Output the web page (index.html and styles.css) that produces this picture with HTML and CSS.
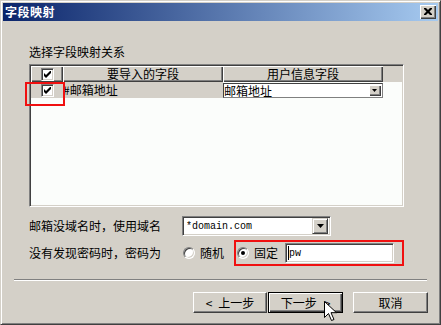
FILE: index.html
```html
<!DOCTYPE html>
<html>
<head>
  <title>字段映射</title>
  <link rel="stylesheet" href="styles.css">
</head>
<body>
  <div class="window">
    <div class="titlebar">
      <span class="title">字段映射</span>
      <span class="close">
        <svg width="8" height="7" viewBox="0 0 8 7"><path d="M0 0h2l2 2 2-2h2v1l-2.5 2.5 2.5 2.5v1h-2l-2-2-2 2h-2v-1l2.5-2.5-2.5-2.5z" fill="#000"/></svg>
      </span>
    </div>

    <div class="content">
      <div class="caption">选择字段映射关系</div>

      <div class="listview">
        <div class="lv-header">
          <div class="hd hd-check"><span class="chk"><svg width="7" height="7" viewBox="0 0 7 7"><path d="M0 2v3l2 2 5-5v-3l-5 5z" fill="#000"/></svg></span></div>
          <div class="hd hd-col">要导入的字段</div>
          <div class="hd hd-col">用户信息字段</div>
          <div class="hd-fill"></div>
        </div>
        <div class="lv-row">
          <div class="cell cell-check"><span class="chk"><svg width="7" height="7" viewBox="0 0 7 7"><path d="M0 2v3l2 2 5-5v-3l-5 5z" fill="#000"/></svg></span></div>
          <div class="cell cell-src">#邮箱地址</div>
          <div class="cell cell-dst">
            <div class="mini-combo">邮箱地址<span class="mini-drop"><svg width="5" height="3" viewBox="0 0 5 3"><path d="M0 0h5l-2.5 3z" fill="#000"/></svg></span></div>
          </div>
        </div>
      </div>

      <div class="form-row domain-row">
        <span class="label">邮箱没域名时，使用域名</span>
        <div class="combo">
          <span class="combo-text">*domain.com</span>
          <span class="drop"><svg width="7" height="4" viewBox="0 0 7 4"><path d="M0 0h7l-3.5 4z" fill="#000"/></svg></span>
        </div>
      </div>

      <div class="form-row pw-row">
        <span class="label">没有发现密码时，密码为</span>
        <label class="radio"><span class="radio-dot"></span>随机</label>
        <div class="marked">
          <label class="radio"><span class="radio-dot on"></span>固定</label>
          <div class="textbox"><span class="caret"></span>pw</div>
        </div>
      </div>

      <div class="divider"></div>

      <div class="buttons">
        <button class="btn btn-back"><span class="arr-l">&lt;</span>上一步</button>
        <button class="btn btn-default">下一步<span class="arr-r">&gt;</span></button>
        <button class="btn btn-cancel">取消</button>
      </div>
    </div>

    <div class="mark-row"></div>
    <svg class="cursor" width="13" height="21" viewBox="0 0 13 21"><path d="M0.5 0.5v16l4-4 3 7 2.5-1-3-6.8h5.5z" fill="#fff" stroke="#000"/></svg>
  </div>
</body>
</html>
```

FILE: styles.css
```css
body {
  margin: 0;
  font-family: "Noto Sans CJK SC", "Liberation Sans", sans-serif;
  font-size: 12px;
  color: #000;
}

.window {
  position: relative;
  width: 441px;
  height: 325px;
  box-sizing: border-box;
  background: #d4d0c8;
  border: 1px solid;
  border-color: #d4d0c8 #404040 #404040 #d4d0c8;
  box-shadow: inset 1px 1px #fff, inset -1px -1px #808080;
  padding: 2px;
  display: flex;
  flex-direction: column;
}

.titlebar {
  height: 18px;
  display: flex;
  align-items: center;
  justify-content: space-between;
  padding-left: 2px;
  background: linear-gradient(to right, #0a246a, #a6caf0);
}

.title {
  color: #fff;
  font-weight: bold;
  letter-spacing: 0.5px;
  line-height: 16px;
}

.close {
  width: 16px;
  height: 14px;
  margin-right: 2px;
  box-sizing: border-box;
  background: #d4d0c8;
  box-shadow: inset 1px 1px #fff, inset -1px -1px #404040, inset -2px -2px #808080;
  display: flex;
  align-items: center;
  justify-content: center;
  padding: 0 1px 1px 0;
}

.content {
  flex: 1;
  display: flex;
  flex-direction: column;
  padding-left: 26px;
}

.caption {
  margin-top: 23px;
  line-height: 16px;
  height: 16px;
}

.listview {
  margin-top: 4px;
  width: 375px;
  height: 143px;
  box-sizing: border-box;
  border: 1px solid;
  border-color: #808080 #fff #fff #808080;
  box-shadow: inset 1px 1px #404040, inset -1px -1px #d4d0c8;
  padding: 1px;
  background: #fbfdfb;
}

.lv-header {
  display: flex;
  height: 16px;
  background: #d4d0c8;
}

.hd {
  height: 16px;
  box-sizing: border-box;
  box-shadow: inset 1px 1px #fff, inset -1px -1px #404040, inset -2px -2px #808080;
  display: flex;
  align-items: center;
  justify-content: center;
  line-height: 16px;
}

.hd-check {
  width: 32px;
  padding-left: 1px;
}

.hd-col {
  width: 160px;
}

.hd-fill {
  flex: 1;
}

.lv-row {
  display: flex;
  height: 16px;
}

.cell {
  height: 16px;
  line-height: 16px;
  display: flex;
  align-items: center;
}

.cell-check {
  width: 32px;
  justify-content: center;
  background: #d4d0c8;
  padding-left: 1px;
  box-sizing: border-box;
}

.cell-src {
  width: 160px;
  background: #d4d0c8;
  white-space: nowrap;
}

.cell-dst {
  width: 160px;
  align-items: flex-start;
  padding-top: 1px;
  box-sizing: border-box;
}

.chk {
  width: 13px;
  height: 13px;
  box-sizing: border-box;
  background: #fff;
  border: 1px solid;
  border-color: #808080 #fff #fff #808080;
  box-shadow: inset 1px 1px #404040, inset -1px -1px #d4d0c8;
  display: flex;
  align-items: center;
  justify-content: center;
}

.mini-combo {
  width: 160px;
  height: 15px;
  box-sizing: border-box;
  border: 1px solid;
  border-color: #404040 #808080 #808080 #404040;
  background: #fff;
  display: flex;
  align-items: center;
  justify-content: space-between;
  line-height: 13px;
  padding-right: 1px;
}

.mini-drop {
  width: 12px;
  height: 11px;
  box-sizing: border-box;
  background: #d4d0c8;
  box-shadow: inset 1px 1px #fff, inset -1px -1px #404040, inset -2px -2px #808080;
  display: flex;
  align-items: center;
  justify-content: center;
  padding: 0 1px 1px 0;
}

.form-row {
  display: flex;
  align-items: center;
}

.form-row .label {
  width: 153px;
  line-height: 16px;
}

.domain-row {
  margin-top: 9px;
}

.combo {
  width: 149px;
  height: 20px;
  box-sizing: border-box;
  border: 1px solid;
  border-color: #808080 #fff #fff #808080;
  box-shadow: inset 1px 1px #404040, inset -1px -1px #d4d0c8;
  background: #fff;
  padding: 2px;
  display: flex;
  align-items: center;
  justify-content: space-between;
}

.combo-text,
.textbox {
  font-family: "Liberation Mono", "DejaVu Sans Mono", monospace;
  font-size: 10px;
  padding-left: 1px;
}

.drop {
  width: 16px;
  height: 16px;
  box-sizing: border-box;
  background: #d4d0c8;
  border: 1px solid;
  border-color: #d4d0c8 #404040 #404040 #d4d0c8;
  box-shadow: inset 1px 1px #fff, inset -1px -1px #808080;
  display: flex;
  align-items: center;
  justify-content: center;
}

.pw-row {
  margin-top: 4px;
  height: 26px;
}

.radio {
  display: flex;
  align-items: center;
  gap: 5px;
  line-height: 16px;
  margin-left: 1px;
}

.radio-dot {
  width: 12px;
  height: 12px;
  box-sizing: border-box;
  border-radius: 50%;
  background: #fff;
  border: 1px solid;
  border-color: #808080 #fff #fff #808080;
  box-shadow: inset 1px 1px #404040, inset -1px -1px #d4d0c8;
  display: flex;
  align-items: center;
  justify-content: center;
}

.radio-dot.on::after {
  content: "";
  width: 4px;
  height: 4px;
  border-radius: 50%;
  background: #000;
}

.marked {
  margin-left: 10px;
  width: 170px;
  height: 26px;
  box-sizing: border-box;
  border: 2px solid #f01010;
  display: flex;
  align-items: center;
  gap: 7px;
}

.marked .radio {
  margin-left: 1px;
}

.textbox {
  width: 109px;
  height: 20px;
  box-sizing: border-box;
  border: 1px solid;
  border-color: #808080 #fff #fff #808080;
  box-shadow: inset 1px 1px #404040, inset -1px -1px #d4d0c8;
  background: #fff;
  display: flex;
  align-items: center;
  padding-left: 2px;
}

.caret {
  width: 1px;
  height: 14px;
  background: #000;
}

.divider {
  margin-top: 13px;
  margin-left: -15px;
  width: 413px;
  border-top: 1px solid #808080;
  border-bottom: 1px solid #fff;
}

.buttons {
  margin-top: 11px;
  display: flex;
  justify-content: flex-end;
  padding-right: 10px;
}

.btn {
  height: 21px;
  width: 75px;
  box-sizing: border-box;
  font-family: "Noto Sans CJK SC", "Liberation Sans", sans-serif;
  font-size: 12px;
  line-height: 16px;
  padding: 0;
  background: #d4d0c8;
  border: 1px solid;
  border-color: #fff #404040 #404040 #fff;
  box-shadow: inset -1px -1px #808080;
  color: #000;
}

.arr-l {
  margin-right: 6px;
}

.arr-r {
  margin-left: 7px;
}

.btn-back {
  width: 74px;
  margin-right: 1px;
}

.btn-default {
  border: 1px solid #000;
  box-shadow: inset 1px 1px #fff, inset -1px -1px #404040, inset -2px -2px #808080;
  margin-right: 10px;
}

.mark-row {
  position: absolute;
  left: 24px;
  top: 81px;
  width: 40px;
  height: 24px;
  border: 2px solid #f01010;
  box-sizing: border-box;
}

.cursor {
  position: absolute;
  left: 323px;
  top: 300px;
}
```
